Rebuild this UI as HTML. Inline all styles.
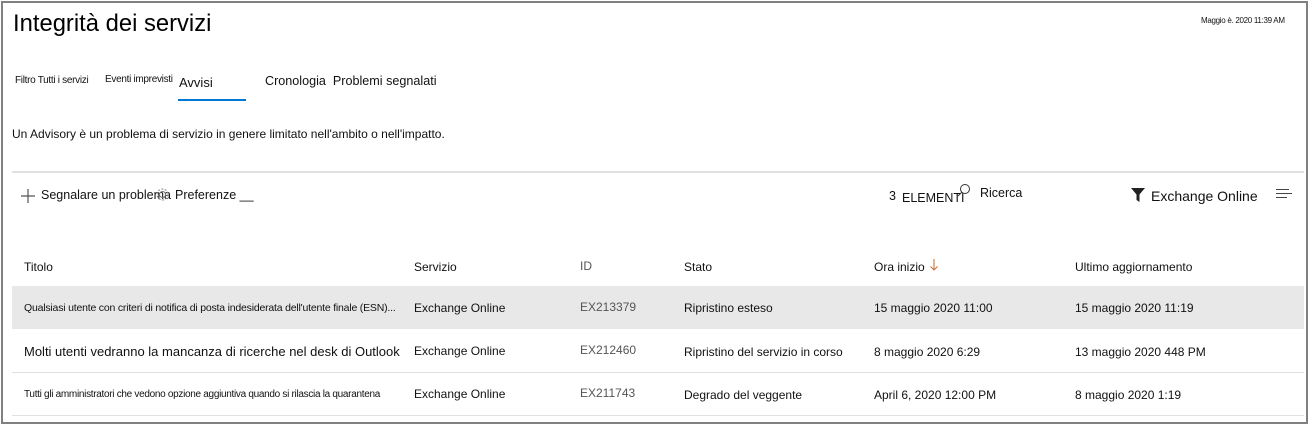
<!DOCTYPE html>
<html><head><meta charset="utf-8"><style>
body{margin:0;width:1310px;height:424px;background:#fff;font-family:"Liberation Sans",sans-serif;color:#111;position:relative;overflow:hidden}
.a{position:absolute;white-space:nowrap}
.frame{position:absolute;left:1px;top:1px;width:1303px;height:419px;border:2px solid #808080;border-right-width:2px}
.sep{position:absolute;left:12px;width:1292px;height:1px;background:#e1e1e1}
.s12{font-size:12px}.s13{font-size:13px}
</style></head><body>
<div class="frame"></div>
<div class="a" style="left:13px;top:10px;font-size:23.8px;color:#000">Integrità dei servizi</div>
<div class="a" style="left:1201px;top:16px;font-size:8px;letter-spacing:-0.3px">Maggio è. 2020 11:39 AM</div>
<div class="a" style="left:15px;top:75px;font-size:10px;letter-spacing:-0.3px">Filtro Tutti i servizi</div>
<div class="a" style="left:105px;top:74px;font-size:10px;letter-spacing:-0.3px">Eventi imprevisti</div>
<div class="a" style="left:179px;top:75px;font-size:13px">Avvisi</div>
<div class="a" style="left:178px;top:99px;width:68px;height:2px;background:#0078d4"></div>
<div class="a" style="left:265px;top:74px;font-size:12.6px">Cronologia&nbsp; Problemi segnalati</div>
<div class="a" style="left:12px;top:127px;font-size:12px">Un Advisory è un problema di servizio in genere limitato nell'ambito o nell'impatto.</div>
<div class="a" style="left:12px;top:171px;width:1292px;height:2px;background:#e1e1e1"></div>
<svg class="a" style="left:20px;top:188px" width="16" height="16"><path d="M8 1V15M1 8H15" stroke="#555" stroke-width="1.2"/></svg>
<div class="a" style="left:41px;top:188px;font-size:12.5px">Segnalare un problema</div>
<svg class="a" style="left:155px;top:187px" width="15" height="15"><circle cx="7.5" cy="7.5" r="3" fill="none" stroke="#777"/><circle cx="7.5" cy="7.5" r="5.5" fill="none" stroke="#888" stroke-dasharray="2 1.5"/></svg>
<div class="a" style="left:175px;top:188px;font-size:12.5px">Preferenze __</div>
<div class="a" style="left:889px;top:189px;font-size:12.5px">3</div>
<div class="a" style="left:902px;top:191px;font-size:12.5px">ELEMENTI</div>
<svg class="a" style="left:957px;top:183px" width="14" height="14"><circle cx="8" cy="6" r="4.5" fill="none" stroke="#333"/><path d="M4.8 9.2L1 13" stroke="#333"/></svg>
<div class="a" style="left:980px;top:186px;font-size:12.5px">Ricerca</div>
<svg class="a" style="left:1130px;top:187px" width="16" height="16"><path d="M1 1H15L9.5 7.5V15L6.5 13V7.5Z" fill="#222"/></svg>
<div class="a" style="left:1151px;top:188px;font-size:14px">Exchange Online</div>
<svg class="a" style="left:1275px;top:188px" width="18" height="12"><path d="M1 1.5H14M1 5.5H17M1 9.5H12" stroke="#444" stroke-width="1"/></svg>
<div class="a s12" style="left:24px;top:260px">Titolo</div>
<div class="a s12" style="left:414px;top:260px">Servizio</div>
<div class="a s12" style="left:580px;top:259px;color:#555">ID</div>
<div class="a s12" style="left:684px;top:260px">Stato</div>
<div class="a s12" style="left:874px;top:260px">Ora inizio</div>
<svg class="a" style="left:929px;top:258px" width="10" height="14"><path d="M5 1V12M1.5 8.5L5 12L8.5 8.5" fill="none" stroke="#c8773a" stroke-width="1.1"/></svg>
<div class="a s12" style="left:1075px;top:260px">Ultimo aggiornamento</div>
<div class="a" style="left:12px;top:286px;width:1292px;height:43px;background:#e8e8e8"></div>
<div class="a" style="left:24px;top:302px;font-size:10.5px;letter-spacing:-0.2px">Qualsiasi utente con criteri di notifica di posta indesiderata dell'utente finale (ESN)...</div>
<div class="a s12" style="left:414px;top:301px">Exchange Online</div>
<div class="a s12" style="left:580px;top:300px;color:#555">EX213379</div>
<div class="a s12" style="left:684px;top:301px">Ripristino esteso</div>
<div class="a s12" style="left:874px;top:301px">15 maggio 2020 11:00</div>
<div class="a s12" style="left:1075px;top:301px">15 maggio 2020 11:19</div>
<div class="sep" style="top:372px"></div>
<div class="sep" style="top:415px"></div>
<div class="a s13" style="left:24px;top:344px">Molti utenti vedranno la mancanza di ricerche nel desk di Outlook</div>
<div class="a s12" style="left:414px;top:344px">Exchange Online</div>
<div class="a s12" style="left:580px;top:343px;color:#555">EX212460</div>
<div class="a s12" style="left:684px;top:345px">Ripristino del servizio in corso</div>
<div class="a s12" style="left:874px;top:345px">8 maggio 2020 6:29</div>
<div class="a s12" style="left:1075px;top:345px">13 maggio 2020 448 PM</div>
<div class="a" style="left:24px;top:389px;font-size:10px;letter-spacing:-0.3px">Tutti gli amministratori che vedono opzione aggiuntiva quando si rilascia la quarantena</div>
<div class="a s12" style="left:414px;top:387px">Exchange Online</div>
<div class="a s12" style="left:580px;top:386px;color:#555">EX211743</div>
<div class="a s12" style="left:684px;top:388px">Degrado del veggente</div>
<div class="a s12" style="left:874px;top:388px">April 6, 2020 12:00 PM</div>
<div class="a s12" style="left:1075px;top:388px">8 maggio 2020 1:19</div>
</body></html>
